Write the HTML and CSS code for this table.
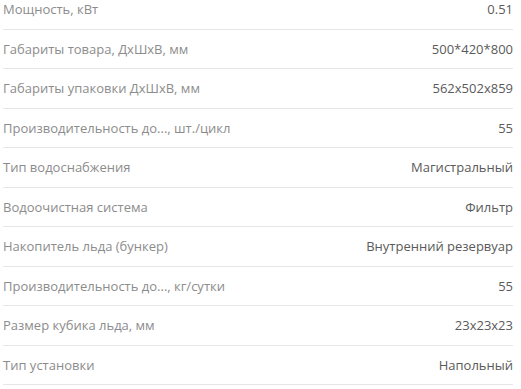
FILE: index.html
```html
<!DOCTYPE html>
<html lang="ru">
<head>
<meta charset="utf-8">
<link rel="stylesheet" href="styles.css">
</head>
<body>
<div class="specs">
  <div class="row"><span class="label">Мощность, кВт</span><span class="value">0.51</span></div>
  <div class="row"><span class="label">Габариты товара, ДхШхВ, мм</span><span class="value">500*420*800</span></div>
  <div class="row"><span class="label">Габариты упаковки ДхШхВ, мм</span><span class="value">562x502x859</span></div>
  <div class="row"><span class="label">Производительность до..., шт./цикл</span><span class="value">55</span></div>
  <div class="row"><span class="label">Тип водоснабжения</span><span class="value">Магистральный</span></div>
  <div class="row"><span class="label">Водоочистная система</span><span class="value">Фильтр</span></div>
  <div class="row"><span class="label">Накопитель льда (бункер)</span><span class="value">Внутренний резервуар</span></div>
  <div class="row"><span class="label">Производительность до..., кг/сутки</span><span class="value">55</span></div>
  <div class="row"><span class="label">Размер кубика льда, мм</span><span class="value">23x23x23</span></div>
  <div class="row"><span class="label">Тип установки</span><span class="value">Напольный</span></div>
</div>
</body>
</html>
```

FILE: styles.css
```css
html, body {
  margin: 0;
  padding: 0;
  background: #fff;
}
body {
  font-family: "Open Sans", "DejaVu Sans", sans-serif;
  font-size: 13px;
}
.specs {
  margin: -10px 8px 0 3px;
}
.row {
  display: flex;
  justify-content: space-between;
  align-items: center;
  height: 38.5px;
  border-bottom: 1px solid #e6e6e6;
}
.label {
  color: #8c8c8c;
}
.value {
  color: #5a5a5a;
}
```
